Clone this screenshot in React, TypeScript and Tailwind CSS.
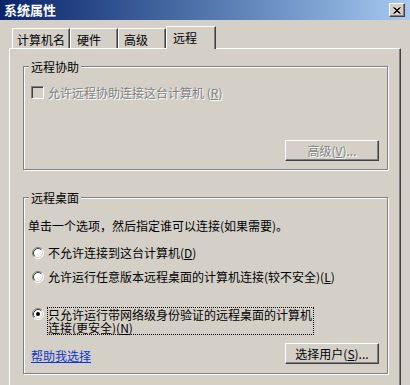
import React from "react";

function Radio({ checked }: { checked?: boolean }) {
  return (
    <svg width="12" height="12" viewBox="0 0 12 12" className="shrink-0">
      <circle cx="6" cy="6" r="5" fill="#ffffff" />
      <path d="M2.11 9.89 A5.5 5.5 0 0 1 9.89 2.11" fill="none" stroke="#808080" strokeWidth="1" />
      <path d="M9.89 2.11 A5.5 5.5 0 0 1 2.11 9.89" fill="none" stroke="#ffffff" strokeWidth="1" />
      <path d="M2.82 9.18 A4.5 4.5 0 0 1 9.18 2.82" fill="none" stroke="#404040" strokeWidth="1" />
      <path d="M9.18 2.82 A4.5 4.5 0 0 1 2.82 9.18" fill="none" stroke="#d4d0c8" strokeWidth="1" />
      {checked && <circle cx="6" cy="6" r="2" fill="#000000" />}
    </svg>
  );
}

function Btn({ children, disabled }: { children: React.ReactNode; disabled?: boolean }) {
  return (
    <div
      className={
        "w-[94px] h-[21px] shrink-0 flex items-center justify-center border border-t-white border-l-white border-r-[#404040] border-b-[#404040] shadow-[inset_-1px_-1px_0_#808080] text-[12px] leading-[12px] " +
        (disabled ? "text-[#808080] [text-shadow:1px_1px_0_#ffffff]" : "text-black")
      }
    >
      {children}
    </div>
  );
}

function Tab({ label, w, pl, selected }: { label: string; w: string; pl: string; selected?: boolean }) {
  return (
    <div
      className={
        "flex items-start border-t border-l border-t-white border-l-white border-r border-r-[#404040] shadow-[inset_-1px_0_0_#808080] bg-[#d4d0c8] text-[12px] leading-[14px] text-black " +
        w +
        " " +
        pl +
        (selected ? " h-[23px] pt-[4px] relative z-10 -mb-[1px]" : " h-[20px] pt-[4px]")
      }
    >
      {label}
    </div>
  );
}

export default function App() {
  return (
    <div className="w-[410px] h-[385px] overflow-hidden bg-[#d4d0c8] [font-family:SimSun,'Noto_Sans_CJK_SC','Noto_Sans_CJK_TC',sans-serif] text-black select-none">
      {/* Title bar */}
      <div className="h-[20px] flex items-center justify-between bg-gradient-to-r from-[#0a246a] to-[#a6caf0] pl-[4px] pr-[5px]">
        <span className="text-white font-bold text-[13px] leading-[14px]">系统属性</span>
        <div className="w-[16px] h-[14px] flex items-center justify-center bg-[#d4d0c8] border border-t-white border-l-white border-r-[#404040] border-b-[#404040] shadow-[inset_-1px_-1px_0_#808080]">
          <svg width="8" height="7" viewBox="0 0 8 7">
            <path d="M0.5 0.5 L6.5 6.5 M1.5 0.5 L7.5 6.5 M6.5 0.5 L0.5 6.5 M7.5 0.5 L1.5 6.5" stroke="#000" strokeWidth="1" />
          </svg>
        </div>
      </div>

      {/* Body */}
      <div className="pl-[9px] pt-[6px]">
        <div className="flex items-end h-[22px] pl-[3px]">
          <Tab label="计算机名" w="w-[58px]" pl="pl-[4px]" />
          <Tab label="硬件" w="w-[48px]" pl="pl-[6px]" />
          <Tab label="高级" w="w-[48px]" pl="pl-[5px]" />
          <Tab label="远程" w="w-[50px]" pl="pl-[6px]" selected />
        </div>

        <div className="w-[392px] h-[400px] border-t border-l border-t-white border-l-white border-r border-r-[#404040] shadow-[inset_-1px_0_0_#808080] pt-[17px] pl-[13px]">
          {/* Group 1 */}
          <div className="w-[365px] flex flex-col border border-[#808080] shadow-[inset_1px_1px_0_#ffffff,1px_1px_0_#ffffff] px-[4px] pb-[8px]">
            <div className="-mt-[7px] ml-[1px] px-[2px] self-start bg-[#d4d0c8] h-[14px] text-[12px] leading-[14px]">远程协助</div>
            <div className="mt-[12px] ml-[3px] h-[13px] flex items-center gap-[4px]">
              <div className="w-[13px] h-[13px] shrink-0 border border-t-[#808080] border-l-[#808080] border-r-white border-b-white shadow-[inset_1px_1px_0_#404040] bg-[#d4d0c8]" />
              <span className="text-[12px] leading-[13px] text-[#808080] [text-shadow:1px_1px_0_#ffffff]">
                允许远程协助连接这台计算机 (<u>R</u>)
              </span>
            </div>
            <div className="mt-[41px] flex justify-end mr-[4px]">
              <Btn disabled>
                高级(<u>V</u>)...
              </Btn>
            </div>
          </div>

          {/* Group 2 */}
          <div className="mt-[27px] w-[365px] flex flex-col border border-[#808080] shadow-[inset_1px_1px_0_#ffffff,1px_1px_0_#ffffff] px-[4px] pb-[9px]">
            <div className="-mt-[7px] ml-[1px] px-[2px] self-start bg-[#d4d0c8] h-[14px] text-[12px] leading-[14px]">远程桌面</div>
            <div className="mt-[14px] h-[14px] text-[12px] leading-[14px]">单击一个选项，然后指定谁可以连接(如果需要)。</div>
            <div className="mt-[13px] ml-[4px] h-[14px] flex items-center gap-[4px]">
              <Radio />
              <span className="text-[12px] leading-[14px]">
                不允许连接到这台计算机(<u>D</u>)
              </span>
            </div>
            <div className="mt-[10px] ml-[4px] h-[14px] flex items-center gap-[4px]">
              <Radio />
              <span className="text-[12px] leading-[14px]">
                允许运行任意版本远程桌面的计算机连接(较不安全)(<u>L</u>)
              </span>
            </div>
            <div className="mt-[23px] ml-[4px] flex items-start gap-[3px]">
              <div className="mt-[1px]">
                <Radio checked />
              </div>
              <div className="border border-dotted border-black text-[12px] leading-[13px] pr-[1px]">
                只允许运行带网络级身份验证的远程桌面的计算机
                <br />
                连接(更安全)(<u>N</u>)
              </div>
            </div>
            <div className="mt-[8px] flex items-start justify-between">
              <span className="ml-[3px] mt-[6px] text-[12px] leading-[14px] text-[#0b36c8] underline">帮助我选择</span>
              <div className="mr-[4px]">
                <Btn>
                  选择用户(<u>S</u>)...
                </Btn>
              </div>
            </div>
          </div>
        </div>
      </div>
    </div>
  );
}
